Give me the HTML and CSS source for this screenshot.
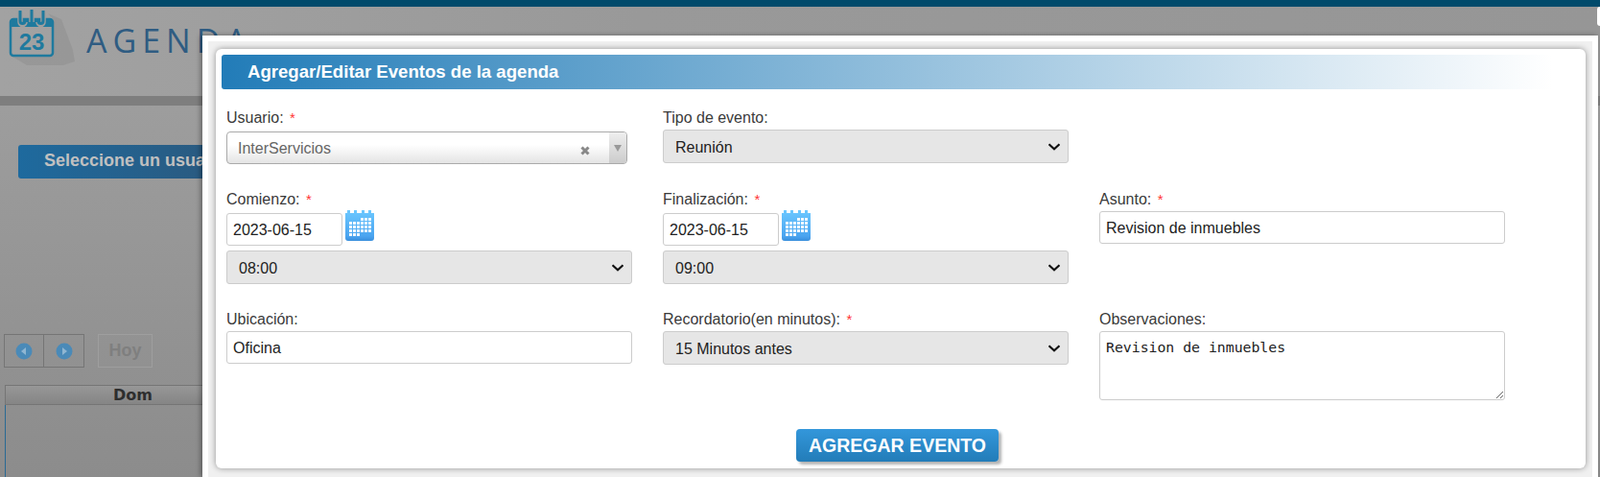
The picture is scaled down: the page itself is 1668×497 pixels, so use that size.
FILE: index.html
```html
<!DOCTYPE html>
<html lang="es">
<head>
  <meta charset="UTF-8">
  <meta name="viewport" content="width=device-width, initial-scale=1.0">
  <title>Agenda</title>
  <link rel="stylesheet" href="styles.css">
</head>
<body>
  <svg class="svg-defs" width="0" height="0">
    <defs>
      <linearGradient id="cal-blue" x1="0" y1="0" x2="0" y2="1">
        <stop offset="0" stop-color="#6cc8ff"/>
        <stop offset="0.85" stop-color="#4aa4f0"/>
        <stop offset="1" stop-color="#3a8fdc"/>
      </linearGradient>
      <pattern id="cal-dots" width="4" height="4" patternUnits="userSpaceOnUse">
        <rect width="3" height="3" fill="#f4faff"/>
      </pattern>
      <symbol id="cal-icon" viewBox="0 0 30 32">
        <path d="M2 3V0h3v3h4V0h3v3h5V0h3v3h4V0h3v3h3v26a3 3 0 0 1-3 3H3a3 3 0 0 1-3-3V3z" fill="url(#cal-blue)"/>
        <rect x="16" y="8" width="12" height="4" fill="url(#cal-dots)"/>
        <rect x="4" y="12" width="24" height="4" fill="url(#cal-dots)"/>
        <rect x="4" y="16" width="24" height="4" fill="url(#cal-dots)"/>
        <rect x="4" y="20" width="24" height="4" fill="url(#cal-dots)"/>
        <rect x="4" y="24" width="12" height="3" fill="url(#cal-dots)"/>
      </symbol>
    </defs>
  </svg>

  <!-- page behind the dialog -->
  <div class="top-bar"></div>
  <header class="site-header">
    <svg class="logo" width="72" height="62" viewBox="0 0 72 62">
      <path d="M42 6l14 6 12 32 2 12-12 4H20L3 50h44V12z" fill="rgba(0,0,0,0.06)"/>
      <path d="M6 12h38a3 3 0 0 1 3 3v32a3 3 0 0 1-3 3H6a3 3 0 0 1-3-3V15a3 3 0 0 1 3-3z" fill="none" stroke="#1f7a9e" stroke-width="2.5"/>
      <path d="M3 15a3 3 0 0 1 3-3h38a3 3 0 0 1 3 3v5H3z" fill="#1f7a9e"/>
      <path d="M13 4v11a2.5 2.5 0 0 0 5 0M25 3v12M37 4v11a2.5 2.5 0 0 1-5 0" fill="none" stroke="#9f9f9f" stroke-width="5.5"/>
      <path d="M13 3v11a2.5 2.5 0 0 0 5 0M25 2v13M37 3v11a2.5 2.5 0 0 1-5 0" fill="none" stroke="#1f7a9e" stroke-width="3"/>
      <text x="25" y="44" class="logo-num">23</text>
    </svg>
    <span class="site-title">AGENDA</span>
  </header>
  <div class="header-strip"></div>

  <main class="content">
    <div class="user-bar">Seleccione un usuario</div>
    <div class="cal-nav">
      <div class="nav-group">
        <button class="nav-btn" type="button">
          <svg width="18" height="18" viewBox="0 0 18 18"><circle cx="9" cy="9" r="8.5" fill="#4a8ab8"/><path d="M11 5v8L6 9z" fill="#8fb6d2"/></svg>
        </button>
        <button class="nav-btn" type="button">
          <svg width="18" height="18" viewBox="0 0 18 18"><circle cx="9" cy="9" r="8.5" fill="#4a8ab8"/><path d="M7 5v8l5-4z" fill="#8fb6d2"/></svg>
        </button>
      </div>
      <button class="today-btn" type="button">Hoy</button>
    </div>
    <div class="cal-head"><span class="cal-day">Dom</span></div>
    <div class="cal-body"></div>
  </main>

  <!-- dialog -->
  <div class="modal">
    <div class="modal-frame">
      <div class="modal-card">
        <h2 class="modal-title">Agregar/Editar Eventos de la agenda</h2>
        <form class="event-form">
          <div class="form-grid">
            <div class="field">
              <label class="field-label">Usuario: <span class="req">*</span></label>
              <div class="chosen">
                <span class="chosen-text">InterServicios</span>
                <svg class="chosen-clear" width="10" height="10" viewBox="0 0 10 10"><path d="M1.5 1.5l7 7M8.5 1.5l-7 7" stroke="#888" stroke-width="3"/></svg>
                <span class="chosen-arrow"><svg width="8" height="7" viewBox="0 0 8 7"><path d="M0 0h8L4 7z" fill="#999"/></svg></span>
              </div>
            </div>
            <div class="field">
              <label class="field-label">Tipo de evento:</label>
              <select class="control select"><option>Reunión</option></select>
            </div>
            <div class="field"></div>

            <div class="field">
              <label class="field-label">Comienzo: <span class="req">*</span></label>
              <div class="date-row">
                <input class="control date-input" type="text" value="2023-06-15">
                <svg class="cal-icon" width="30" height="32"><use href="#cal-icon"/></svg>
              </div>
              <select class="control select time-select"><option>08:00</option></select>
            </div>
            <div class="field">
              <label class="field-label">Finalización: <span class="req">*</span></label>
              <div class="date-row">
                <input class="control date-input" type="text" value="2023-06-15">
                <svg class="cal-icon" width="30" height="32"><use href="#cal-icon"/></svg>
              </div>
              <select class="control select time-select"><option>09:00</option></select>
            </div>
            <div class="field">
              <label class="field-label">Asunto: <span class="req">*</span></label>
              <input class="control text-input" type="text" value="Revision de inmuebles">
            </div>

            <div class="field">
              <label class="field-label">Ubicación:</label>
              <input class="control text-input" type="text" value="Oficina">
            </div>
            <div class="field">
              <label class="field-label">Recordatorio(en minutos): <span class="req">*</span></label>
              <select class="control select"><option>15 Minutos antes</option></select>
            </div>
            <div class="field">
              <label class="field-label">Observaciones:</label>
              <textarea class="control notes">Revision de inmuebles</textarea>
            </div>
          </div>
          <div class="form-actions">
            <button class="submit-btn" type="button">AGREGAR EVENTO</button>
          </div>
        </form>
      </div>
    </div>
  </div>
  <div class="modal-close"></div>
</body>
</html>
```

FILE: styles.css
```css
* {
  box-sizing: border-box;
}
html, body {
  height: 497px;
  overflow: hidden;
}
body {
  margin: 0;
  font-family: 'Liberation Sans', Arial, sans-serif;
  background: linear-gradient(#a2a2a2, #8c8c8c);
  color: #333;
}
.svg-defs {
  position: absolute;
}

/* page behind the dialog */
.top-bar {
  height: 7px;
  background: #004a6b;
}
.site-header {
  height: 93px;
  display: flex;
  align-items: flex-start;
  padding: 1px 0 0 8px;
  background: linear-gradient(to right, #a2a2a2, #999 40%, #969696);
}
.logo {
  flex: none;
}
.logo-num {
  font-family: 'Liberation Sans', Arial, sans-serif;
  font-size: 24px;
  font-weight: bold;
  fill: #1f7a9e;
  text-anchor: middle;
}
.site-title {
  margin: 11px 0 0 10px;
  font-family: 'Open Sans', sans-serif;
  font-size: 34px;
  letter-spacing: 6px;
  color: #2f5c82;
}
.header-strip {
  height: 10px;
  background: #7e7e7e;
}
.content {
  padding: 41px 0 0 4px;
}
.user-bar {
  width: 800px;
  height: 35px;
  margin-left: 15px;
  padding: 6px 0 0 27px;
  border-radius: 3px;
  background: linear-gradient(to right, #1e6a9e, #2a5a80 25%);
  color: #c0c0c0;
  font-size: 18px;
  font-weight: bold;
}
.cal-nav {
  display: flex;
  gap: 14px;
  margin-top: 162px;
}
.nav-group {
  display: flex;
}
.nav-btn {
  width: 42px;
  height: 35px;
  padding: 3px 0 0;
  border: 1px solid #757575;
  background: none;
}
.nav-btn + .nav-btn {
  border-left: 0;
}
.today-btn {
  width: 57px;
  height: 35px;
  padding: 0;
  border: 1px solid #9e9e9e;
  background: none;
  color: #7f7f7f;
  font-family: 'Liberation Sans', Arial, sans-serif;
  font-size: 18px;
  font-weight: bold;
}
.cal-head {
  width: 400px;
  height: 21px;
  margin: 18px 0 0 1px;
  padding-left: 112px;
  border: 1px solid #757575;
  background: linear-gradient(#979797, #858585);
}
.cal-day {
  font-family: 'DejaVu Sans', sans-serif;
  font-size: 16px;
  font-weight: bold;
  line-height: 19px;
  color: #2e2e2e;
}
.cal-body {
  width: 400px;
  height: 76px;
  margin-left: 1px;
  border-left: 1px solid #2a6a94;
}

/* dialog */
.modal {
  position: absolute;
  left: 211px;
  top: 37px;
  width: 1455px;
  height: 460px;
  padding: 6px 6px 0;
  background: #fff;
  box-shadow: -2px 0 5px rgba(0, 0, 0, 0.35);
}
.modal-frame {
  height: 100%;
  padding: 8px 7px 0 8px;
  background: #f0f0f0;
  overflow: hidden;
}
.modal-card {
  height: 437px;
  padding: 6px;
  border-radius: 6px;
  background: #fff;
  box-shadow: 0 0 6px rgba(0, 0, 0, 0.4);
}
.modal-close {
  position: absolute;
  left: 1665px;
  top: 7px;
  width: 3px;
  height: 20px;
  border-radius: 3px 0 0 3px;
  background: #fff;
}
.modal-title {
  height: 36px;
  margin: 0;
  padding: 0 0 0 27px;
  border-radius: 3px 0 0 3px;
  background: linear-gradient(to right, #227cb8, #fff 98%);
  color: #fff;
  font-size: 18.6px;
  font-weight: bold;
  line-height: 36px;
}
.event-form {
  padding: 19px 0 0 5px;
}
.form-grid {
  display: grid;
  grid-template-columns: repeat(3, 455px);
  row-gap: 26px;
}
.field-label {
  display: block;
  height: 20px;
  margin-bottom: 3px;
  font-size: 16px;
  line-height: 21px;
  color: #3a3a3a;
}
.req {
  margin-left: 2px;
  font-size: 15px;
  color: #f33;
}
.control {
  display: block;
  width: 423px;
  border: 1px solid #ccc;
  border-radius: 3px;
  font-family: 'Liberation Sans', Arial, sans-serif;
  font-size: 16px;
  color: #222;
}
.select {
  height: 35px;
  padding: 1px 0 0 12px;
  appearance: none;
  background: #e6e6e6 url("data:image/svg+xml,%3Csvg xmlns='http://www.w3.org/2000/svg' width='14' height='8' viewBox='0 0 14 8'%3E%3Cpath d='M1.5 1.2L7 6.2l5.5-5' fill='none' stroke='%23111' stroke-width='2.2'/%3E%3C/svg%3E") no-repeat right 7px center;
}
.time-select {
  margin-top: 5px;
}
.text-input {
  height: 34px;
  padding: 1px 6px 0;
  background: #fff;
}
.date-row {
  display: flex;
  height: 36px;
  padding-top: 2px;
}
.date-input {
  width: 121px;
  height: 34px;
  padding: 1px 6px 0;
}
.cal-icon {
  flex: none;
  margin: -3px 0 0 3px;
}
.notes {
  height: 72px;
  padding: 7px 6px;
  font-family: 'DejaVu Sans Mono', monospace;
  font-size: 14.8px;
  line-height: 17px;
}
.chosen {
  display: flex;
  align-items: center;
  width: 418px;
  height: 34px;
  margin-top: 5px;
  padding-left: 11px;
  border: 1px solid #aaa;
  border-radius: 4px;
  background: linear-gradient(#fff 40%, #e4e4e4);
}
.chosen-text {
  flex: 1;
  padding-top: 2px;
  font-size: 16px;
  color: #666;
}
.chosen-clear {
  margin: 6px 20px 0 0;
}
.chosen-arrow {
  display: flex;
  align-items: center;
  justify-content: center;
  align-self: stretch;
  width: 18px;
  border-radius: 0 3px 3px 0;
  background: linear-gradient(#eee, #ccc);
}
.form-actions {
  display: flex;
  justify-content: center;
  padding: 30px 12px 0 0;
}
.submit-btn {
  width: 211px;
  height: 34px;
  padding: 0;
  border: 0;
  border-radius: 4px;
  background: linear-gradient(#3397db, #227cb8);
  box-shadow: 3px 3px 3px rgba(0, 0, 0, 0.3);
  color: #fff;
  font-family: 'Liberation Sans', Arial, sans-serif;
  font-size: 19.5px;
  font-weight: bold;
}
```
